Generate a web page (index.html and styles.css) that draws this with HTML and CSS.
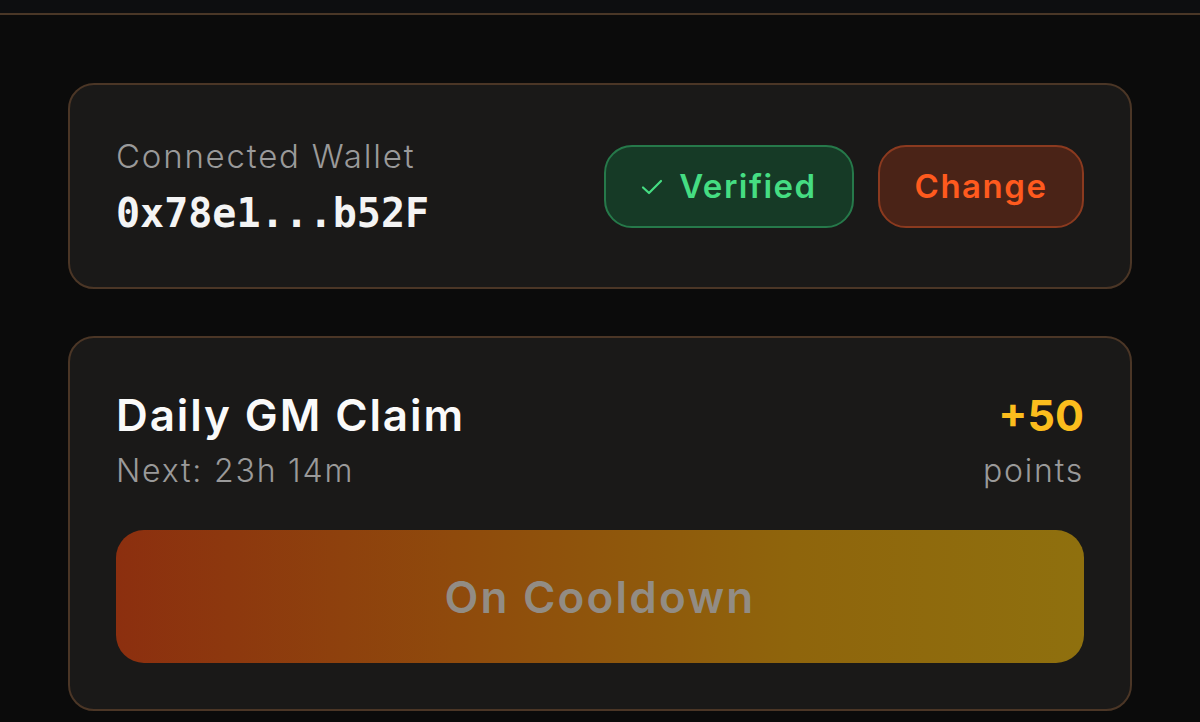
FILE: index.html
```html
<!DOCTYPE html>
<html lang="en">
<head>
<meta charset="utf-8">
<title>GM Claim</title>
<link rel="stylesheet" href="styles.css">
</head>
<body>
<div class="topbar"></div>
<main class="content">
  <section class="card wallet">
    <div class="wallet-info">
      <div class="label">Connected Wallet</div>
      <div class="address">0x78e1...b52F</div>
    </div>
    <div class="actions">
      <button class="pill verified">
        <svg class="check" width="22" height="16" viewBox="0 0 22 16"><path d="M2 8.5 L8 14 L20 2" fill="none" stroke="currentColor" stroke-width="2.2" stroke-linecap="round" stroke-linejoin="round"/></svg>
        <span>Verified</span>
      </button>
      <button class="pill change">Change</button>
    </div>
  </section>
  <section class="card claim">
    <div class="claim-head">
      <div class="claim-left">
        <div class="title">Daily GM Claim</div>
        <div class="sub">Next: 23h 14m</div>
      </div>
      <div class="claim-right">
        <div class="points">+50</div>
        <div class="sub">points</div>
      </div>
    </div>
    <button class="cooldown">On Cooldown</button>
  </section>
</main>
</body>
</html>
```
FILE: styles.css
```css
* { box-sizing: border-box; }
html, body { margin: 0; padding: 0; }
body {
  width: 1200px;
  height: 722px;
  overflow: hidden;
  background: #0b0b0b;
  font-family: Inter, "Noto Sans", sans-serif;
  color: #fff;
}
.topbar {
  height: 15px;
  background: #0d0e10;
  border-bottom: 2px solid #4a3727;
}
.content {
  padding: 68px 68px 0 68px;
  display: flex;
  flex-direction: column;
  gap: 47px;
}
.card {
  background: #1a1918;
  border: 2px solid #4b3626;
  border-radius: 26px;
  padding: 0 46px;
}
.wallet {
  height: 206px;
  display: flex;
  align-items: center;
  justify-content: space-between;
}
.wallet-info {
  display: flex;
  flex-direction: column;
  gap: 16px;
}
.label {
  font-size: 33px;
  font-weight: 300;
  letter-spacing: 1.8px;
  color: #9a9a9a;
  line-height: 38px;
}
.address {
  font-family: "DejaVu Sans Mono", monospace;
  font-size: 40px;
  font-weight: 700;
  line-height: 44px;
  color: #f4f4f4;
}
.actions {
  display: flex;
  gap: 24px;
}
.pill {
  height: 83px;
  border-radius: 28px;
  font-family: inherit;
  font-size: 33px;
  font-weight: 600;
  letter-spacing: 1.5px;
  display: flex;
  align-items: center;
  justify-content: center;
  gap: 16px;
  padding: 0;
}
.verified {
  width: 250px;
  background: #163a26;
  border: 2px solid #26794a;
  color: #45dd82;
}
.check { margin-top: 2px; }
.change {
  width: 206px;
  background: #4a2317;
  border: 2px solid #8b3a1f;
  color: #ff5a1e;
}
.claim {
  padding-top: 51px;
  padding-bottom: 46px;
}
.claim-head {
  display: flex;
  justify-content: space-between;
  align-items: flex-start;
}
.claim-right { text-align: right; }
.title {
  font-size: 44px;
  font-weight: 600;
  letter-spacing: 1.9px;
  line-height: 52px;
  color: #fafafa;
}
.points {
  font-size: 43px;
  font-weight: 700;
  line-height: 52px;
  color: #fbbd1d;
}
.sub {
  font-size: 32px;
  font-weight: 300;
  letter-spacing: 1.8px;
  line-height: 40px;
  color: #9a9a9a;
  margin-top: 10px;
}
.cooldown {
  display: block;
  width: 100%;
  height: 133px;
  margin-top: 39px;
  border: none;
  border-radius: 28px;
  background: linear-gradient(90deg, #8c2f0f 0%, #8f4a0c 35%, #8f650c 70%, #8f700e 100%);
  font-family: inherit;
  font-size: 44px;
  font-weight: 600;
  letter-spacing: 2.2px;
  color: #928c84;
}
```
